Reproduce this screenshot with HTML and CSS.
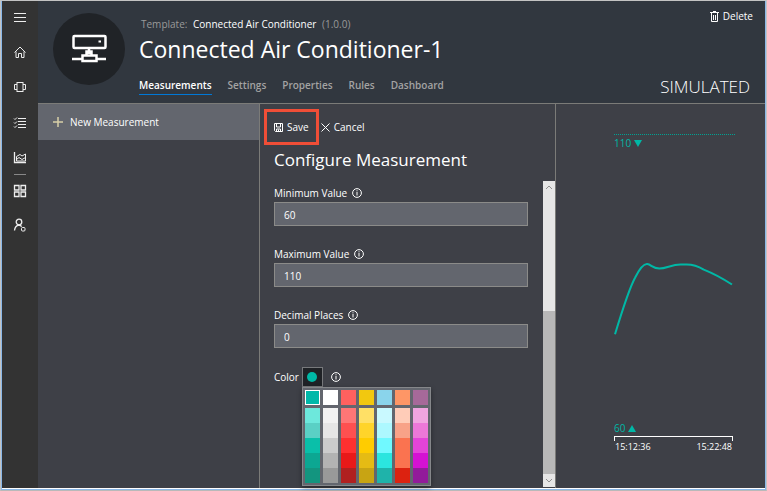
FILE: index.html
```
<!DOCTYPE html>
<html lang="en">
<head>
<meta charset="utf-8">
<title>Connected Air Conditioner-1</title>
<link rel="stylesheet" href="styles.css">
</head>
<body>
<div class="app">
  <nav class="rail" aria-label="Main">
    <button class="rail-item" aria-label="Menu"><svg width="14" height="14" viewBox="0 0 14 14"><path d="M1 2.500h12M1 6.500h12M1 10.500h12"/></svg></button>
    <a class="rail-item" href="#" aria-label="Home"><svg width="14" height="14" viewBox="0 0 14 14"><path d="M1.500 7.500 7 2l5.500 5.500M3 6.500v6h2.500V8.500h3v4H11v-6"/></svg></a>
    <a class="rail-item" href="#" aria-label="Devices"><svg width="14" height="14" viewBox="0 0 14 14"><rect x="4" y="2.500" width="6" height="9"/><path d="M4 4.500H1.500v5H4M10 4.500h2.500v5H10"/></svg></a>
    <a class="rail-item" href="#" aria-label="Jobs"><svg width="14" height="14" viewBox="0 0 14 14"><path d="M5 3.500h8M5 6.500h8M5 9.500h8M5 12.500h8M1 3.500l1 1 2-2M1 7.500l1 1 2-2M1 11.500l1 1 2-2"/></svg></a>
    <a class="rail-item" href="#" aria-label="Analytics"><svg width="14" height="14" viewBox="0 0 14 14"><path d="M1.500 2v10.500H13" stroke-width="1.300"/><path d="M3.500 11V6.500L7 4.500l2 1.500 3.500-2v7zM3.500 9.500 6 7.500l3 2 3.500-2"/></svg></a>
    <hr class="rail-rule">
    <a class="rail-item rail-item-first" href="#" aria-label="Application builder"><svg width="14" height="14" viewBox="0 0 14 14"><path d="M1.500 1.500h4.500v4.500h-4.500zM8 1.500h4.500v4.500H8zM1.500 8h4.500v4.500h-4.500zM8 8h4.500v4.500H8z" stroke-width="1.300"/></svg></a>
    <a class="rail-item" href="#" aria-label="Administration"><svg width="14" height="14" viewBox="0 0 14 14"><circle cx="6" cy="4" r="2.800" stroke-width="1.300"/><path d="M1.500 12.500c.3-3 2-5 4.500-5.500 1.200.2 2 .8 2.700 1.600" stroke-width="1.300"/><rect x="8.500" y="9.500" width="3.500" height="3.500" rx="1"/></svg></a>
  </nav>

  <div class="main">
    <header class="header">
      <div class="avatar">
        <svg width="36" height="30" viewBox="0 0 36 30"><rect x="2.500" y="2" width="32" height="12" rx="1"/><path d="M27.500 7.500h2.500" stroke-width="2"/><path d="M18 14v6M15.500 21.500v-4h5v4M11.500 21.500h14v5.500h-14zM1 25h10.500M25.500 25H35"/></svg>
      </div>
      <div class="heading">
        <p class="template">Template: <span class="template-name">Connected Air Conditioner</span> (1.0.0)</p>
        <h1 class="title">Connected Air Conditioner-1</h1>
        <nav class="tabs" aria-label="Device">
          <a class="tab tab-active" href="#">Measurements</a>
          <a class="tab" href="#">Settings</a>
          <a class="tab" href="#">Properties</a>
          <a class="tab" href="#">Rules</a>
          <a class="tab" href="#">Dashboard</a>
        </nav>
      </div>
      <div class="header-side">
        <button class="command"><svg width="9" height="11" viewBox="0 0 9 11"><path d="M0 1.500h9M3 .5h3M1.500 2v8.500h6V2M3.500 4v5M5.500 4v5"/></svg>Delete</button>
        <span class="status">SIMULATED</span>
      </div>
    </header>

    <div class="panes">
      <section class="list">
        <button class="new-item"><svg width="12" height="12" viewBox="0 0 12 12"><path d="M6 1v10M1 6h10" stroke="#d8cfa8" stroke-width="1.500"/></svg>New Measurement</button>
      </section>

      <section class="config">
        <div class="toolbar">
          <button class="command command-marked"><svg width="9" height="9" viewBox="0 0 9 9"><path d="M.5.5h8v8h-7l-1-1zM2.500.5v3.500h4V.5M2.500 8.500v-2.500h4v2.500M4.500 6.500v2"/></svg>Save</button>
          <button class="command"><svg width="9" height="9" viewBox="0 0 9 9"><path d="m.5.5 8 8M8.500.5l-8 8"/></svg>Cancel</button>
        </div>
        <h2 class="config-title">Configure Measurement</h2>
        <div class="scroller">
          <form class="form">
            <div class="field">
              <label class="label" for="min">Minimum Value <svg class="info" width="10" height="10" viewBox="0 0 10 10"><circle cx="5" cy="5" r="4.400"/><path d="M5 4v3.500M5 2.300v1"/></svg></label>
              <input class="input" id="min" type="text" value="60">
            </div>
            <div class="field">
              <label class="label" for="max">Maximum Value <svg class="info" width="10" height="10" viewBox="0 0 10 10"><circle cx="5" cy="5" r="4.400"/><path d="M5 4v3.500M5 2.300v1"/></svg></label>
              <input class="input" id="max" type="text" value="110">
            </div>
            <div class="field">
              <label class="label" for="places">Decimal Places <svg class="info" width="10" height="10" viewBox="0 0 10 10"><circle cx="5" cy="5" r="4.400"/><path d="M5 4v3.500M5 2.300v1"/></svg></label>
              <input class="input" id="places" type="text" value="0">
            </div>
            <div class="color-field">
              <label for="color">Color</label>
              <div class="picker">
                <button class="picker-button" id="color" type="button"><span class="dot"></span></button>
                <div class="palette" id="palette"></div>
              </div>
              <svg class="info" width="10" height="10" viewBox="0 0 10 10"><circle cx="5" cy="5" r="4.400"/><path d="M5 4v3.500M5 2.300v1"/></svg>
            </div>
          </form>
          <div class="scrollbar" aria-hidden="true">
            <div class="scroll-thumb"><svg width="8" height="5" viewBox="0 0 8 5"><path d="m1 4 3-3 3 3"/></svg></div>
            <div class="scroll-track"></div>
            <div class="scroll-end"><svg width="8" height="5" viewBox="0 0 8 5"><path d="m1 1 3 3 3-3"/></svg></div>
          </div>
        </div>
      </section>

      <section class="chart" aria-label="Measurement chart">
        <div class="limit limit-max">110 <svg width="8" height="7" viewBox="0 0 8 7"><path class="fill" d="M0 0h8L4 7z"/></svg></div>
        <svg class="plot" viewBox="0 0 120 270" preserveAspectRatio="none"><path d="M1 184C7 164 15 138 21 127 25 119 29 113 33 113.500 37 114 38 118 45 118 52 118 57 114 66 114H72C80 114 84 116 89 119 99 123 108 128 117 134"/></svg>
        <div class="limit">60 <svg width="8" height="7" viewBox="0 0 8 7"><path class="fill" d="M0 7h8L4 0z"/></svg></div>
        <div class="axis"><span>15:12:36</span><span>15:22:48</span></div>
      </section>
    </div>
  </div>
</div>
<script src="palette.js"></script>
</body>
</html>
```
FILE: styles.css
```
* { box-sizing: border-box; }
body {
  margin: 0;
  font: 10px/16px "Open Sans", "Noto Sans", sans-serif;
  color: #fff;
  background: #3e4047;
}
h1, h2, p { margin: 0; font-weight: 400; }
a { color: inherit; text-decoration: none; }
button {
  padding: 0;
  border: 0;
  background: none;
  color: inherit;
  font: inherit;
}
svg { flex: none; fill: none; stroke: #fff; }
.fill { fill: #00b8a6; stroke: none; }

.app {
  display: flex;
  min-height: 100vh;
  border: 1px solid #c3c3c3;
  border-bottom-color: #b9b9b9;
  box-shadow: inset 1px 0 #8bb8e8, inset -1px 0 #8bb8e8, inset 0 -1px #8bb8e8, inset 0 -2px #fff;
  padding: 0 1px 2px;
}
.rail {
  flex: none;
  display: flex;
  flex-direction: column;
  align-items: center;
  width: 36px;
  background: #333;
}
.rail-item {
  display: flex;
  align-items: center;
  justify-content: center;
  width: 36px;
  height: 35px;
}
.rail-item:first-child { height: 33px; }
.rail-item svg { stroke: #eee; }
.rail-rule {
  width: 12px;
  margin: 0;
  border: 0;
  border-top: 1px solid #888;
}
.rail-item-first { height: 32px; }

.main { flex: 1; display: flex; flex-direction: column; min-width: 0; }
.header {
  display: flex;
  background: #31373f;
  border-bottom: 1px solid #7b7b78;
  padding: 0 15px;
}
.avatar {
  display: flex;
  align-items: center;
  justify-content: center;
  width: 72px;
  height: 72px;
  margin: 12px 14px 0 0;
  border-radius: 50%;
  background: #202327;
}
.avatar svg { stroke-width: 2.500; }
.heading { padding: 15px 0 8px; }
.template { padding-left: 2px; color: #9a9a9a; }
.template-name { margin: 0 3px; color: #fff; }
.title { font-size: 23px; line-height: 34px; white-space: nowrap; }
.tabs { display: flex; gap: 16px; margin-top: 10px; }
.tab { font-weight: 600; color: #a3a3a3; line-height: 18px; }
.tab-active { color: #fff; border-bottom: 1px solid #0078d7; }
.header-side {
  flex: 1;
  display: flex;
  flex-direction: column;
  justify-content: space-between;
  align-items: flex-end;
  padding: 7px 0 4px;
}
.header-side .command { margin-right: -3px; }
.command { display: flex; align-items: center; gap: 4px; }
.status { font-size: 17px; line-height: 24px; font-weight: 300; }

.panes {
  flex: 1;
  display: grid;
  grid-template-columns: 222fr 296fr 209fr;
}
.list { border-right: 1px solid #7b7b78; }
.new-item {
  display: flex;
  align-items: center;
  gap: 6px;
  width: 100%;
  height: 36px;
  padding-left: 14px;
  background: #63666e;
}
.config {
  display: flex;
  flex-direction: column;
  border-right: 1px solid #7b7b78;
}
.toolbar { display: flex; gap: 2px; padding: 5px 4px 0; }
.command-marked { height: 36px; padding: 0 7px; border: 3px solid #f04e37; }
.config-title { padding-left: 14px; font-size: 17px; line-height: 30px; margin-bottom: 6px; }
.scroller { flex: 1; display: flex; }
.form {
  flex: 1;
  display: flex;
  flex-direction: column;
  gap: 19px;
  padding: 3px 15px 0 14px;
}
.label { display: flex; align-items: center; gap: 5px; height: 18px; }
.input {
  display: block;
  width: 100%;
  height: 24px;
  padding: 2px 9px 0;
  border: 1px solid #8b8b89;
  background: #63666e;
  color: #fff;
  font: inherit;
}
.color-field { display: flex; align-items: center; gap: 3px; }
.color-field .info { margin-left: 5px; }
.picker { position: relative; }
.picker-button {
  display: flex;
  align-items: center;
  justify-content: center;
  width: 21px;
  height: 20px;
  border: 1px solid #77797c;
  background: #1f2226;
}
.dot { width: 10px; height: 10px; border-radius: 50%; background: #00b8a6; }
.palette {
  position: absolute;
  top: 100%;
  left: 0;
  display: flex;
  gap: 3px;
  padding: 2px;
  border: 1px solid #85878a;
  background: #63666e;
  box-shadow: 0 2px 5px #0006;
}
.shades { display: flex; flex-direction: column; }
.swatch { width: 15px; height: 15px; }
.swatch:first-child { margin-bottom: 3px; }
.swatch-selected { border: 1px solid #fff; }
.scrollbar { display: flex; flex-direction: column; width: 12px; background: #e6e6e6; margin-bottom: 1px; }
.scrollbar svg { stroke: #8f8f8f; }
.scroll-thumb { flex: 128; display: flex; justify-content: center; padding-top: 4px; }
.scroll-track { flex: 165; background: #b8b8b8; }
.scroll-end { display: flex; align-items: center; justify-content: center; height: 13px; }

.chart {
  display: flex;
  flex-direction: column;
  padding: 30px 30px 33px 58px;
}
.limit { color: #00b8a6; line-height: 16px; }
.limit-max { border-top: 1px dotted #00a292; }
.plot { flex: 1 1 0px; contain: size; min-height: 0; width: 100%; }
.plot path { stroke: #00b8a6; stroke-width: 2; }
.axis {
  display: flex;
  justify-content: space-between;
  height: 5px;
  margin-right: 2px;
  margin-bottom: 14px;
  border: 1px solid #fff;
  border-bottom: 0;
  padding-top: 2px;
  font-size: 9px;
}
```
FILE: palette.js
```
const columns = [
  ["Teal", "#00b8a9", "#6de8dc", "#5ad0c5", "#0abfa9", "#0ca792", "#13957f"],
  ["Gray", "#ffffff", "#f2f2f2", "#e6e6e6", "#cccccc", "#b3b3b3", "#999999"],
  ["Red", "#ff615f", "#ff7676", "#ff5050", "#ff3030", "#e81919", "#b02020"],
  ["Yellow", "#f2c80f", "#ffe066", "#ffd42a", "#ffcc00", "#e5bb14", "#c8a413"],
  ["Blue", "#8ad4eb", "#c9f9ff", "#adf8ff", "#70f9ff", "#2be5df", "#1fb3aa"],
  ["Orange", "#fe9666", "#ffccb8", "#f8a288", "#fa7350", "#fa7350", "#dc2210"],
  ["Purple", "#a66999", "#f0a5e0", "#ec78d8", "#e344d8", "#d412d2", "#921b9a"]
];
const palette = document.getElementById("palette");
columns.forEach(([name, ...shades], c) => {
  const column = document.createElement("div");
  column.className = "shades";
  shades.forEach((color, r) => {
    const swatch = document.createElement("button");
    swatch.type = "button";
    swatch.className = c + r === 0 ? "swatch swatch-selected" : "swatch";
    swatch.style.backgroundColor = color;
    swatch.setAttribute("aria-label", name + " " + (r + 1));
    column.append(swatch);
  });
  palette.append(column);
});
```
